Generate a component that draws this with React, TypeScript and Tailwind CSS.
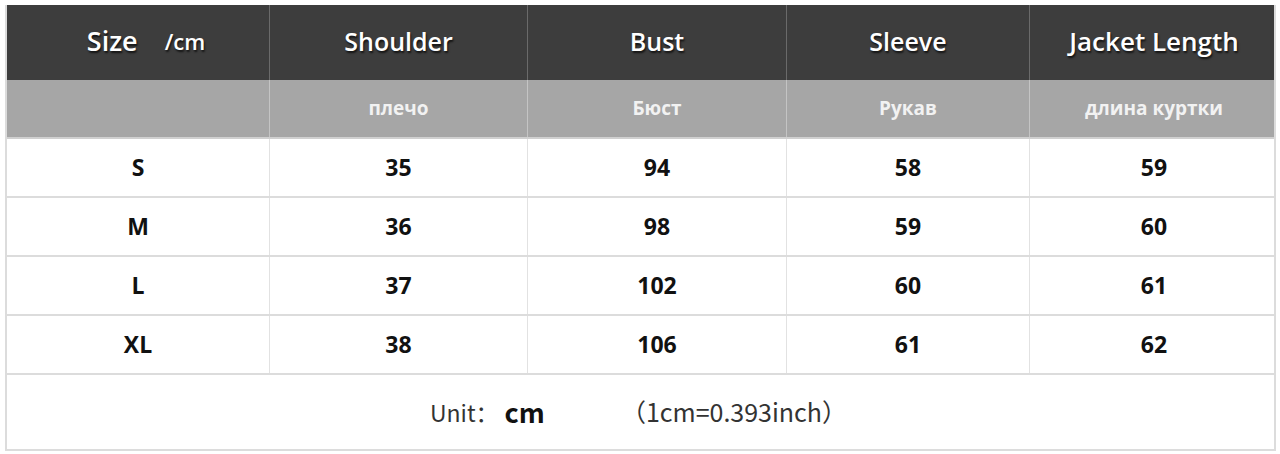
const cols = 'grid grid-cols-[263px_258px_259px_243px_248px]'

const rows = [
  ['S', '35', '94', '58', '59'],
  ['M', '36', '98', '59', '60'],
  ['L', '37', '102', '60', '61'],
  ['XL', '38', '106', '61', '62'],
]

const english = ['Shoulder', 'Bust', 'Sleeve', 'Jacket Length']
const russian = ['плечо', 'Бюст', 'Рукав', 'длина куртки']

export default function App() {
  return (
    <div className="w-[1280px] h-[454px] bg-white pt-[5px] pl-[5px] font-['Open_Sans',sans-serif]">
      <div className="w-[1271px] border-x-2 border-b-2 border-[#dcdcdc]">
        {/* Dark English header */}
        <div className={`${cols} h-[75px] bg-[#3d3d3d] text-white text-[25px] font-semibold [text-shadow:1px_2px_2px_rgba(0,0,0,0.7)]`}>
          <div className="flex items-center justify-center gap-[27px] pb-[2px] pl-[16px] border-r border-[#6a6a6a]">
            <span className="text-[27px]">Size</span>
            <span className="text-[22px]">/cm</span>
          </div>
          {english.map((t, i) => (
            <div key={t} className={`flex items-center justify-center pb-[2px] ${i < 3 ? 'border-r border-[#6a6a6a]' : ''} ${i === 3 ? 'text-[26px]' : ''}`}>
              {t}
            </div>
          ))}
        </div>

        {/* Grey Russian header */}
        <div className={`${cols} h-[59px] bg-[#a6a6a6] text-[#f2f2f2] text-[19px] font-bold border-b-2 border-[#d0d0d0]`}>
          <div className="border-r border-[#c4c4c4]" />
          {russian.map((t, i) => (
            <div key={t} className={`flex items-center justify-center ${i < 3 ? 'border-r border-[#c4c4c4]' : ''}`}>
              {t}
            </div>
          ))}
        </div>

        {/* Measurements */}
        {rows.map((r) => (
          <div key={r[0]} className={`${cols} h-[59px] border-b-2 border-[#dcdcdc] text-[23px] font-bold text-[#111]`}>
            {r.map((v, i) => (
              <div key={i} className={`flex items-center justify-center ${i < 4 ? 'border-r border-[#e2e2e2]' : ''}`}>
                {v}
              </div>
            ))}
          </div>
        ))}

        {/* Unit note */}
        <div className="h-[74px] flex items-center pl-[423px] text-[23px] text-[#333] font-['Noto_Sans_CJK_SC',sans-serif]">
          <span>Unit：</span>
          <span className="ml-[6px] text-[27px] font-bold text-[#111]">cm</span>
          <span className="ml-[76px] text-[25px]">（1cm=0.393inch）</span>
        </div>
      </div>
    </div>
  )
}
